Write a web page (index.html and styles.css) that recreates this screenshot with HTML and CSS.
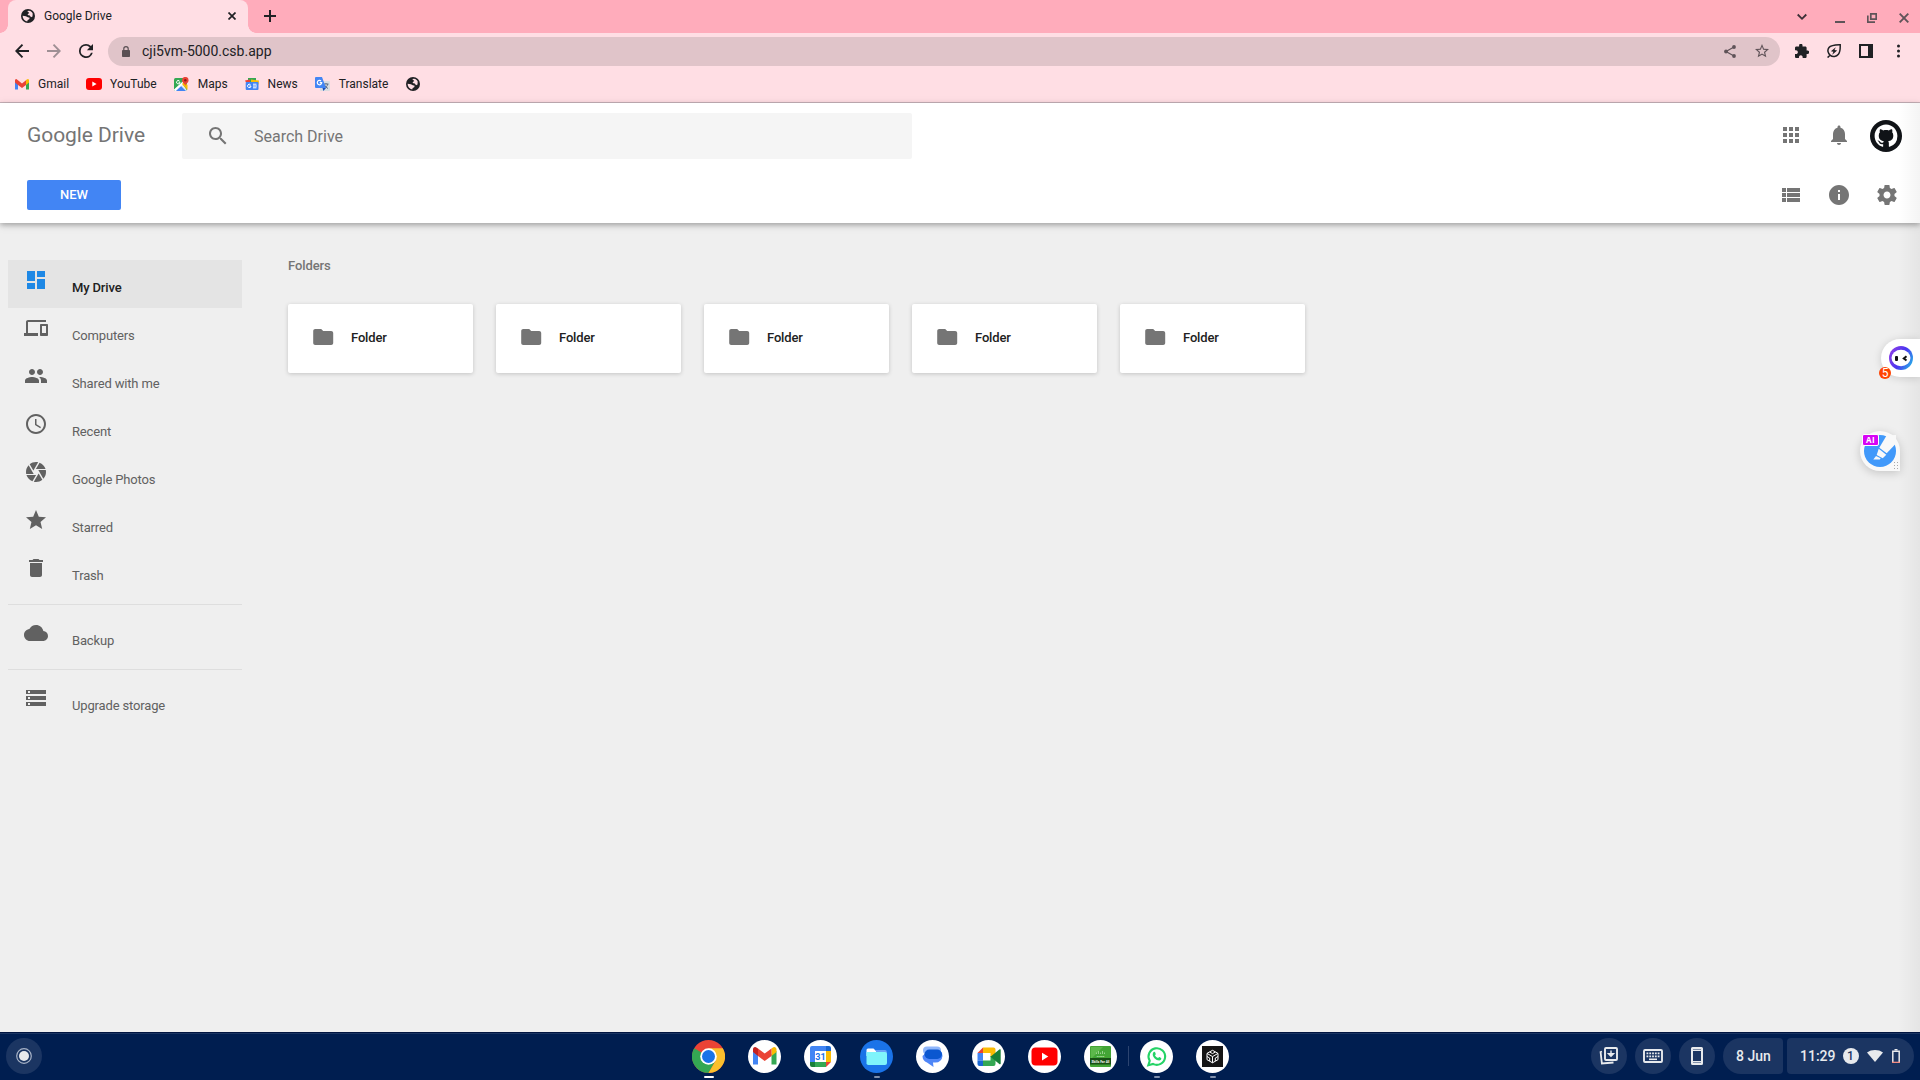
FILE: index.html
```html
<!DOCTYPE html>
<html lang="en">
<head>
<meta charset="utf-8">
<title>Google Drive</title>
<link rel="stylesheet" href="styles.css">
</head>
<body>
<svg class="defs" width="0" height="0" aria-hidden="true">
  <symbol id="globe" viewBox="0 0 14 14"><circle cx="7" cy="7" r="7" fill="#202124"/><path d="M6.2 2.1 8 1.7c1.800.300 3.100 1.300 3.700 2.900L11.500 7.500 10 8.200 8.800 6.500 7.300 6.200 6.500 5.200 8.300 4.100z" fill="#ffdee4"/><path d="M1.600 6.700 4.900 7.200 6.800 8.200 8.700 8.700 8.200 10.300 6.700 11 6.200 12.400C3.500 11.900 1.600 9.700 1.600 6.700z" fill="#ffdee4"/></symbol>
  <symbol id="folder" viewBox="-.2 0 24 24"><path d="M10 4H4c-1.100 0-1.990.9-1.990 2L2 18c0 1.100.9 2 2 2h16c1.100 0 2-.9 2-2V8c0-1.100-.9-2-2-2h-8l-2-2z"/></symbol>
</svg>

<div class="browser">
  <div class="tabstrip">
    <div class="tab">
      <svg class="i14"><use href="#globe"/></svg>
      <span class="tab-title">Google Drive</span>
      <svg class="tab-close" width="8" height="8" viewBox="0 0 8 8" stroke="#202124" stroke-width="1.700"><path d="M.5.5l7 7M7.500.5l-7 7"/></svg>
    </div>
    <svg class="new-tab" width="12" height="12" viewBox="0 0 12 12" stroke="#202124" stroke-width="2"><path d="M6 0v12M0 6h12"/></svg>
    <div class="window-controls">
      <svg width="10" height="16" viewBox="0 0 10 16" fill="none" stroke="#3c3036" stroke-width="1.800"><path d="M.7 5.500 5 9.800l4.300-4.300"/></svg>
      <svg width="10" height="16" viewBox="0 0 10 16"><path d="M0 12h10v2H0z" fill="#5f5358"/></svg>
      <svg width="10" height="16" viewBox="0 0 10 16" fill="none" stroke="#5f5358" stroke-width="1.700"><path d="M3.800 4.800h5.400v5.400H3.800zM.8 6.500v6.700H8"/></svg>
      <svg width="10" height="16" viewBox="0 0 10 16" stroke="#5f5358" stroke-width="1.900"><path d="M.7 4.700l8.600 8.600M9.300 4.700.7 13.300"/></svg>
    </div>
  </div>

  <div class="toolbar">
    <svg width="14" height="14" viewBox="0 0 14 14" fill="none" stroke="#202124" stroke-width="1.900"><path d="M14 7H1.500M7.500.7 1.300 7l6.200 6.300"/></svg>
    <svg width="14" height="14" viewBox="0 0 14 14" fill="none" stroke="#9f8f94" stroke-width="1.900"><path d="M0 7h12.500M6.500.7 12.700 7l-6.200 6.300"/></svg>
    <svg width="14" height="14" viewBox="4 4 16 16" fill="#202124"><path d="M17.650 6.350A7.958 7.958 0 0 0 12 4a8 8 0 1 0 7.730 10h-2.080A6 6 0 1 1 12 6c1.660 0 3.140.69 4.220 1.780L13 11h7V4l-2.350 2.350z"/></svg>
    <div class="omnibox">
      <svg width="8" height="11" viewBox="0 0 8 11"><rect y="4" width="8" height="7" rx=".8" fill="#5a5054"/><path d="M1.800 4V2.800a2.200 2.200 0 0 1 4.400 0V4" fill="none" stroke="#5a5054" stroke-width="1.200"/></svg>
      <span class="url">cji5vm-5000.csb.app</span>
      <svg width="12" height="13" viewBox="0 0 12 13"><path d="M10 2 2 6.500l8 4.500" fill="none" stroke="#5f5358" stroke-width="1.200"/><g fill="#5f5358"><circle cx="10" cy="2" r="1.900"/><circle cx="2" cy="6.500" r="1.900"/><circle cx="10" cy="11" r="1.900"/></g></svg>
      <svg width="14" height="14" viewBox="2 2 20 20" fill="#5f5358"><path d="M22 9.240l-7.190-.62L12 2 9.190 8.630 2 9.240l5.460 4.730L5.820 21 12 17.270 18.180 21l-1.630-7.030L22 9.240zM12 15.400l-3.760 2.270 1-4.280-3.320-2.880 4.380-.38L12 6.100l1.710 4.040 4.380.38-3.320 2.880 1 4.280L12 15.400z"/></svg>
    </div>
    <div class="extensions">
      <svg width="14" height="14" viewBox="2 1.500 20.500 20.500" fill="#202124"><path d="M20.500 11H19V7c0-1.100-.9-2-2-2h-4V3.500C13 2.120 11.880 1 10.500 1S8 2.120 8 3.500V5H4c-1.100 0-1.990.9-1.990 2v3.800H3.500c1.490 0 2.700 1.210 2.700 2.700s-1.210 2.700-2.700 2.700H2V20c0 1.100.9 2 2 2h3.800v-1.500c0-1.490 1.210-2.700 2.700-2.700 1.490 0 2.700 1.210 2.700 2.700V22H17c1.100 0 2-.9 2-2v-4h1.500c1.380 0 2.500-1.120 2.500-2.500S21.880 11 20.500 11z"/></svg>
      <svg width="14" height="14" viewBox="0 0 14 14"><path d="M13.200.8c.2 5.200 0 7.300-1.800 9.500-2 2.500-5.800 2.800-8.100 1C.6 9.200.2 5.800 2 3.500 4 1 8 1 13.200.8zM3.200 11 .6 13.600" fill="none" stroke="#202124" stroke-width="1.500"/><path d="M8.800 3.200 3.900 7.300l2.500.5-1.200 3 5-4.200-2.700-.5z" fill="#202124"/></svg>
      <svg width="14" height="14" viewBox="0 0 14 14"><path d="M0 0h14v14H0zM2 2v10h7V2z" fill="#202124" fill-rule="evenodd"/></svg>
      <svg width="14" height="14" viewBox="0 0 14 14" fill="#202124"><circle cx="7.500" cy="2" r="1.500"/><circle cx="7.500" cy="7" r="1.500"/><circle cx="7.500" cy="12" r="1.500"/></svg>
    </div>
  </div>

  <div class="bookmarks">
    <a class="bm"><svg width="14" height="11" viewBox="0 0 14 11"><path d="M0 1.500V10.500h3V5z" fill="#4285f4"/><path d="M14 1.500V10.500h-3V5z" fill="#34a853"/><path d="M11 1l1.300-.8A1.100 1.100 0 0 1 14 1.200V3.500L11 6z" fill="#fbbc04"/><path d="M3 6 0 3.500V1.200A1.100 1.100 0 0 1 1.700.3L7 4.500 11 1.200V6L7 9z" fill="#ea4335"/></svg>Gmail</a>
    <a class="bm tight"><svg width="16" height="12" viewBox="0 0 16 12"><rect width="16" height="12" rx="3" fill="#f00"/><path d="M6.300 3.500v5L10.600 6z" fill="#fff"/></svg>YouTube</a>
    <a class="bm"><svg width="15" height="14" viewBox="0 0 15 14"><rect y="1" width="13" height="13" rx="1.500" fill="#34a853"/><path d="M0 13 8 6l5 7.500-.8.500H1z" fill="#e8eaed"/><path d="M2 14l5-5 5 5z" fill="#4285f4"/><path d="M0 12.500 12.500 1 14 3 1 14z" fill="#fff"/><path d="M8 7l5.500 6V8L10 5z" fill="#fbbc04"/><path d="M11.300 9C11.300 6.500 8 6 8 3.200a3.300 3.300 0 0 1 6.600 0C14.600 6 11.300 6.500 11.300 9z" fill="#ea4335"/><circle cx="11.300" cy="3.300" r="1.200" fill="#8c1d18"/><path d="M5.500 4A1.700 1.700 0 1 0 6 5.200H4.500" fill="none" stroke="#fff"/></svg>Maps</a>
    <a class="bm"><svg width="14" height="12" viewBox="0 0 14 12"><path d="M3 0h8v4H3z" fill="#34a853"/><path d="M0 2.500 5 1.500v3H1z" fill="#ea4335"/><path d="M6 1.500l8 1-.5 4H6z" fill="#fbbc04"/><rect x=".7" y="4" width="12.800" height="8" rx="1" fill="#4285f4"/><path d="M5.500 6.700A1.700 1.700 0 1 0 6 8H4.300M8 6.200h3.500M8 8h4M8 9.800h3.500" stroke="#fff" fill="none"/></svg>News</a>
    <a class="bm last"><svg width="15" height="14" viewBox="0 0 15 14"><rect x="5" y="4" width="10" height="10" rx="1" fill="#dadce0"/><path d="M8.500 7h5M11 6v1M12.800 7c-.5 2.200-2 3.600-3.500 4.500M9.500 8c.7 1.600 2 2.800 3.500 3.500" stroke="#5f6f85" fill="none"/><path d="M1 0h6l4 11H1a1 1 0 0 1-1-1V1a1 1 0 0 1 1-1z" fill="#4285f4"/><path d="M7.500 11H11l-2.600 3z" fill="#1a50b8"/><path d="M6 4A2.200 2.200 0 1 0 6.700 5.600H4.700" stroke="#fff" stroke-width="1.200" fill="none"/></svg>Translate</a>
    <svg class="i14"><use href="#globe"/></svg>
  </div>
</div>

<div class="page">
  <header class="header">
    <div class="row top">
      <h1 class="logo">Google Drive</h1>
      <div class="search">
        <svg width="24" height="24" viewBox="0 0 24 24" fill="#757575"><path d="M15.500 14h-.79l-.28-.27C15.410 12.590 16 11.110 16 9.500 16 5.910 13.090 3 9.500 3S3 5.910 3 9.500 5.910 16 9.500 16c1.610 0 3.090-.59 4.230-1.570l.27.28v.79l5 4.990L20.490 19l-4.990-5zm-6 0C7.010 14 5 11.990 5 9.500S7.010 5 9.500 5 14 7.010 14 9.500 11.990 14 9.500 14z"/></svg>
        <span>Search Drive</span>
      </div>
      <div class="actions">
        <svg viewBox="0 0 24 24"><path d="M4 8h4V4H4v4zm6 12h4v-4h-4v4zm-6 0h4v-4H4v4zm0-6h4v-4H4v4zm6 0h4v-4h-4v4zm6-10v4h4V4h-4zm-6 4h4V4h-4v4zm6 6h4v-4h-4v4zm0 6h4v-4h-4v4z"/></svg>
        <svg viewBox="0 0 24 24"><path d="M12 22c1.100 0 2-.9 2-2h-4c0 1.100.89 2 2 2zm6-6v-5c0-3.070-1.640-5.640-4.500-6.320V4c0-.83-.67-1.500-1.500-1.500s-1.500.67-1.500 1.500v.68C7.630 5.360 6 7.920 6 11v5l-2 2v1h16v-1l-2-2z"/></svg>
        <svg class="avatar" viewBox="0 0 32 32"><circle cx="16" cy="16" r="16" fill="#101317"/><path transform="translate(4.600 4.600) scale(1.425)" fill="#fff" d="M8 0C3.580 0 0 3.580 0 8c0 3.540 2.290 6.530 5.470 7.590.4.070.55-.17.55-.38 0-.19-.01-.82-.01-1.490-2.010.37-2.530-.49-2.690-.94-.09-.23-.48-.94-.82-1.130-.28-.15-.68-.52-.01-.53.63-.01 1.080.58 1.230.82.72 1.210 1.870.87 2.330.66.07-.52.28-.87.51-1.070-1.780-.2-3.640-.89-3.640-3.950 0-.87.31-1.590.82-2.150-.08-.2-.36-1.020.08-2.120 0 0 .67-.21 2.200.82.64-.18 1.320-.27 2-.27.68 0 1.360.09 2 .27 1.530-1.040 2.200-.82 2.200-.82.44 1.100.16 1.920.08 2.120.51.56.82 1.270.82 2.150 0 3.070-1.870 3.750-3.650 3.950.29.25.54.73.54 1.480 0 1.070-.01 1.930-.01 2.200 0 .21.15.46.55.38A8.013 8.013 0 0 0 16 8c0-4.420-3.580-8-8-8z"/></svg>
      </div>
    </div>
    <div class="row bottom">
      <button class="new">NEW</button>
      <div class="actions">
        <svg viewBox="0 0 24 24"><path d="M3 14h4v-4H3v4zm0 5h4v-4H3v4zM3 9h4V5H3v4zm5 5h13v-4H8v4zm0 5h13v-4H8v4zM8 5v4h13V5H8z"/></svg>
        <svg viewBox="0 0 24 24"><path d="M12 2C6.480 2 2 6.480 2 12s4.480 10 10 10 10-4.480 10-10S17.520 2 12 2zm1 15h-2v-6h2v6zm0-8h-2V7h2v2z"/></svg>
        <svg viewBox="0 0 24 24"><path d="M19.430 12.980c.04-.32.07-.64.07-.98s-.03-.66-.07-.98l2.110-1.650c.19-.15.24-.42.12-.64l-2-3.460c-.12-.22-.39-.3-.61-.22l-2.490 1c-.52-.4-1.080-.73-1.690-.98l-.38-2.650C14.460 2.180 14.250 2 14 2h-4c-.25 0-.46.18-.49.42l-.38 2.650c-.61.25-1.170.59-1.690.98l-2.490-1c-.23-.09-.49 0-.61.22l-2 3.460c-.13.22-.07.49.12.64l2.110 1.650c-.04.32-.07.65-.07.98s.03.66.07.98l-2.110 1.650c-.19.15-.24.42-.12.64l2 3.460c.12.22.39.3.61.22l2.490-1c.52.4 1.080.73 1.690.98l.38 2.650c.03.24.24.42.49.42h4c.25 0 .46-.18.49-.42l.38-2.650c.61-.25 1.170-.59 1.690-.98l2.490 1c.23.09.49 0 .61-.22l2-3.460c.12-.22.07-.49-.12-.64l-2.110-1.650zM12 15.500c-1.930 0-3.500-1.570-3.500-3.500s1.570-3.500 3.500-3.500 3.500 1.570 3.500 3.500-1.570 3.500-3.500 3.500z"/></svg>
      </div>
    </div>
  </header>

  <div class="body">
    <nav class="sidebar">
      <a class="item active"><svg viewBox="0 0 24 24"><path d="M3 13h8V3H3v10zm0 8h8v-6H3v6zm10 0h8V11h-8v10zm0-18v6h8V3h-8z"/></svg><span>My Drive</span></a>
      <a class="item"><svg viewBox="0 0 24 24"><path d="M4 6h18V4H4c-1.100 0-2 .9-2 2v11H0v3h14v-3H4V6zm19 2h-6c-.55 0-1 .45-1 1v10c0 .55.45 1 1 1h6c.55 0 1-.45 1-1V9c0-.55-.45-1-1-1zm-1 9h-4v-7h4v7z"/></svg><span>Computers</span></a>
      <a class="item"><svg viewBox="0 0 24 24"><path d="M16 11c1.660 0 2.990-1.340 2.990-3S17.660 5 16 5c-1.660 0-3 1.340-3 3s1.340 3 3 3zm-8 0c1.660 0 2.990-1.340 2.990-3S9.660 5 8 5C6.340 5 5 6.340 5 8s1.340 3 3 3zm0 2c-2.330 0-7 1.170-7 3.500V19h14v-2.500c0-2.330-4.670-3.500-7-3.500zm8 0c-.29 0-.62.02-.97.05 1.160.84 1.970 1.970 1.970 3.450V19h6v-2.500c0-2.330-4.670-3.500-7-3.500z"/></svg><span>Shared with me</span></a>
      <a class="item"><svg viewBox="0 0 24 24"><path d="M11.990 2C6.470 2 2 6.480 2 12s4.470 10 9.990 10C17.520 22 22 17.520 22 12S17.520 2 11.990 2zM12 20c-4.420 0-8-3.580-8-8s3.580-8 8-8 8 3.580 8 8-3.580 8-8 8zm.5-13H11v6l5.250 3.150.75-1.230-4.500-2.670z"/></svg><span>Recent</span></a>
      <a class="item"><svg viewBox="0 0 24 24"><path d="M9.400 10.500l4.770-8.260C13.470 2.090 12.750 2 12 2c-2.400 0-4.600.85-6.320 2.250l3.660 6.350.06-.1zM21.540 9c-.92-2.920-3.150-5.260-6-6.340L11.880 9h9.660zm.26 1h-7.490l.29.500 4.760 8.250C21 16.970 22 14.610 22 12c0-.69-.07-1.350-.2-2zM8.540 12l-3.900-6.750C3.010 7.030 2 9.390 2 12c0 .69.07 1.350.2 2h7.490l-1.150-2zm-6.080 3c.92 2.920 3.150 5.260 6 6.340L12.120 15H2.460zm11.270 0l-3.900 6.760c.7.15 1.420.24 2.170.24 2.400 0 4.600-.85 6.320-2.250l-3.660-6.350-.93 1.600z"/></svg><span>Google Photos</span></a>
      <a class="item"><svg viewBox="0 0 24 24"><path d="M12 17.270L18.180 21l-1.640-7.030L22 9.240l-7.190-.61L12 2 9.190 8.630 2 9.240l5.460 4.730L5.820 21z"/></svg><span>Starred</span></a>
      <a class="item"><svg viewBox="0 0 24 24"><path d="M6 19c0 1.100.9 2 2 2h8c1.100 0 2-.9 2-2V7H6v12zM19 4h-3.500l-1-1h-5l-1 1H5v2h14V4z"/></svg><span>Trash</span></a>
      <hr>
      <a class="item"><svg viewBox="0 0 24 24"><path d="M19.350 10.040C18.670 6.590 15.640 4 12 4 9.110 4 6.600 5.640 5.350 8.040 2.340 8.360 0 10.910 0 14c0 3.310 2.690 6 6 6h13c2.760 0 5-2.240 5-5 0-2.640-2.050-4.780-4.650-4.960z"/></svg><span>Backup</span></a>
      <hr>
      <a class="item"><svg viewBox="0 0 24 24"><path d="M2 20h20v-4H2v4zm2-3h2v2H4v-2zM2 4v4h20V4H2zm4 3H4V5h2v2zm-4 7h20v-4H2v4zm2-3h2v2H4v-2z"/></svg><span>Upgrade storage</span></a>
    </nav>
    <main class="main">
      <h2>Folders</h2>
      <div class="cards">
        <div class="card"><svg><use href="#folder"/></svg>Folder</div>
        <div class="card"><svg><use href="#folder"/></svg>Folder</div>
        <div class="card"><svg><use href="#folder"/></svg>Folder</div>
        <div class="card"><svg><use href="#folder"/></svg>Folder</div>
        <div class="card"><svg><use href="#folder"/></svg>Folder</div>
      </div>
    </main>
  </div>

  <div class="edge-shade"></div>
  <div class="assistant">
    <svg width="24" height="24" viewBox="0 0 24 24"><defs><linearGradient id="ring" x1="0" y1=".3" x2="1" y2=".8"><stop offset="0" stop-color="#8a3fe8"/><stop offset=".5" stop-color="#4a35f0"/><stop offset="1" stop-color="#25b5e8"/></linearGradient></defs><circle cx="12" cy="12" r="12" fill="url(#ring)"/><ellipse cx="12" cy="12" rx="9.500" ry="8.200" fill="#fff"/><rect x="6" y="10" width="3" height="5" rx="1" fill="#111"/><path d="M17.500 10.300 14.800 12.500l2.700 2" fill="none" stroke="#111" stroke-width="2"/></svg>
    <span class="count">5</span>
  </div>
  <div class="marker">
    <svg width="32" height="32" viewBox="0 0 32 32"><circle cx="16" cy="16" r="16" fill="#4199fa"/><path d="M22.700.3 15.300 12.700l7.400 5.600L32 8.500V0z" fill="#f9f9f9"/><path d="M14.700 13.700l7.600 6-3.600 3.600-6-3.300z" fill="#f9f9f9"/><path d="M12 21l4.600 2.300-.8 1.300H9.300z" fill="#f9f9f9"/></svg>
    <span class="ai">AI</span>
    <svg class="grip" width="6" height="9" viewBox="0 0 6 9" fill="#aaa"><path d="M0 0h1v1H0zM3 0h1v1H3zM0 3h1v1H0zM3 3h1v1H3zM0 6h1v1H0zM3 6h1v1H3z"/></svg>
  </div>
</div>

<footer class="shelf">
  <div class="launcher"><svg width="16" height="16" viewBox="0 0 16 16"><circle cx="8" cy="8" r="7.300" fill="none" stroke="#a7b2c6" stroke-width="1.200"/><circle cx="8" cy="8" r="5" fill="#e8eaed"/></svg></div>
  <div class="apps">
    <div class="app on"><svg viewBox="0 0 33 33"><circle cx="16.500" cy="16.500" r="16.500" fill="#ea4335"/><path d="M16.500 16.500 2.200 8.250A16.500 16.500 0 0 0 16.500 33L23.600 20.600z" fill="#34a853"/><path d="M16.500 8.250h14.300A16.500 16.500 0 0 1 16.500 33l7.100-12.300z" fill="#fbc02d"/><circle cx="16.500" cy="16.500" r="8.300" fill="#fff"/><circle cx="16.500" cy="16.500" r="6.500" fill="#1a73e8"/></svg></div>
    <div class="app"><svg viewBox="0 0 33 33"><circle cx="16.500" cy="16.500" r="16.500" fill="#fff"/><path d="M5 11v13.500h5V14z" fill="#4285f4"/><path d="M28.500 11v13.500h-5V14z" fill="#34a853"/><path d="M23.500 8.500 25.300 7.300a2.200 2.200 0 0 1 3.200 2.200V12l-5 4z" fill="#fbbc04"/><path d="M10 8.500 16.700 13.500 23.500 8.500V16l-6.800 5L10 16z" fill="#ea4335"/><path d="M10 16 5 12V9.500a2.200 2.200 0 0 1 3.400-2.100L10 8.500z" fill="#c5221f"/></svg></div>
    <div class="app"><svg viewBox="0 0 33 33"><circle cx="16.500" cy="16.500" r="16.500" fill="#fff"/><path d="M6 8a2 2 0 0 1 2-2h14v5H11v11H6z" fill="#4285f4"/><path d="M22 6h3a2 2 0 0 1 2 2v3h-5z" fill="#1967d2"/><path d="M22 11h5v11h-5z" fill="#fbbc04"/><path d="M11 22h11v5H11z" fill="#34a853"/><path d="M6 22h5v5H8a2 2 0 0 1-2-2z" fill="#188038"/><path d="M22 22h5l-5 5z" fill="#ea4335"/><text x="16.500" y="19.800" text-anchor="middle" class="cal">31</text></svg></div>
    <div class="app open"><svg viewBox="0 0 33 33"><circle cx="16.500" cy="16.500" r="16.500" fill="#1a73e8"/><path d="M16 10h9a1.800 1.800 0 0 1 1.800 1.800V20H16z" fill="#6aa3f8"/><path d="M6.500 10a1.500 1.500 0 0 1 1.500-1.500h5.500L16 11v5H6.500z" fill="#fff"/><path d="M6.500 12H25a2 2 0 0 1 2 2v9a2 2 0 0 1-2 2H8.300a1.800 1.800 0 0 1-1.800-1.800z" fill="#7ff4fb"/></svg></div>
    <div class="app"><svg viewBox="0 0 33 33"><circle cx="16.500" cy="16.500" r="16.500" fill="#fff"/><path d="M13 10h8a6 6 0 0 1 5 3l.5 3a7 7 0 0 1-7 6.500H17L17.500 27 11 22.500C8 21.500 6.500 19 6.500 16z" fill="#4f86f7"/><rect x="7" y="6.500" width="18" height="8" rx="4" fill="#8fb6fb"/><rect x="8.500" y="9.500" width="17.500" height="9.500" rx="4.750" fill="#0b57d0"/></svg></div>
    <div class="app"><svg viewBox="0 0 33 33"><circle cx="16.500" cy="16.500" r="16.500" fill="#fff"/><path d="M5.500 13 11 7.500V13z" fill="#ea4335"/><path d="M11 7.500h10.500a2 2 0 0 1 2 2V16l-5 1v-4H11z" fill="#fbbc04"/><path d="M5.500 13H11v7.500H5.500z" fill="#4285f4"/><path d="M5.500 20.500H11V26H7.500a2 2 0 0 1-2-2z" fill="#1967d2"/><path d="M11 20.500h7.500V16h5v8a2 2 0 0 1-2 2H11z" fill="#34a853"/><path d="M18.500 16.700 27.300 9.500a.8.800 0 0 1 1.400.6v13.300a.8.800 0 0 1-1.400.6z" fill="#188038"/></svg></div>
    <div class="app"><svg viewBox="0 0 33 33"><circle cx="16.500" cy="16.500" r="16.500" fill="#fff"/><rect x="3.500" y="7.500" width="26" height="18" rx="4" fill="#f00"/><path d="M14 12.800v7.600l6.300-3.800z" fill="#fff"/></svg></div>
    <div class="app"><svg viewBox="0 0 33 33"><circle cx="16.500" cy="16.500" r="16.500" fill="#fff"/><rect x="6" y="6" width="21" height="21" rx="1" fill="#43a535"/><path d="M7 7l12 0-12 12z" fill="#5cb84b"/><rect x="6" y="18" width="21" height="6.500" fill="#174f14"/><path d="M12.500 12.500v1.500M14.500 11v3M16.500 12.500v1.500M18.500 11v3M20.500 12.500v1.500" stroke="#b9e3b2" stroke-width=".7"/><text x="16.500" y="16.900" text-anchor="middle" class="cisco">CISCO</text><text x="16.500" y="22.500" text-anchor="middle" class="skills">Skills For All</text></svg></div>
    <div class="app open first"><svg viewBox="0 0 33 33"><circle cx="16.500" cy="16.500" r="16.500" fill="#fff"/><path d="M8.300 25.200 9.700 20.800A8.300 8.300 0 1 1 13 23.900z" fill="none" stroke="#25d366" stroke-width="2.100"/><path d="M13.700 12c.5-.4 1.200-.3 1.400.3l.7 1.600c0 .5-.5.9-.8 1.300.7 1.300 1.700 2.200 3.100 2.800.4-.3.700-1 1.200-1l1.900.9c.5 1.200-.8 2.500-2 2.500-3.300 0-6.500-3.500-6.500-6 0-1 .4-1.900 1-2.400z" fill="#25d366"/></svg></div>
    <div class="app open"><svg viewBox="0 0 33 33"><circle cx="16.500" cy="16.500" r="16.500" fill="#fff"/><rect x="6" y="6" width="21" height="21" fill="#151515"/><path d="M16.500 10.300l5.500 3.100v6.300l-5.500 3.100-5.500-3.100v-6.300zM11 13.400l5.500 3.200 5.500-3.200M16.500 16.600v6.200M13.700 12l2.800 1.600 2.800-1.600M11 16.500l2.700 1.500v3M22 16.500 19.300 18v3" fill="none" stroke="#fff" stroke-width="1"/></svg></div>
  </div>
  <div class="status">
    <div class="round"><svg width="20" height="20" viewBox="0 0 20 20"><rect x="6" y="2" width="12" height="12" rx="1" fill="none" stroke="#e8eaed" stroke-width="1.900"/><path d="M3 5.500 1.600 6l1.300 11.500L14.500 16.500" fill="none" stroke="#e8eaed" stroke-width="1.800"/><path d="M12 4.500v4M9.500 7.800 12 10.300l2.500-2.500z" stroke="#e8eaed" stroke-width="1.400" fill="#e8eaed"/></svg></div>
    <div class="round"><svg width="20" height="14" viewBox="0 0 20 14"><rect x="1" y="1" width="18" height="12" rx="1" fill="none" stroke="#e8eaed" stroke-width="1.900"/><path d="M3.500 4.300h13M3.500 7.300h13" stroke="#e8eaed" stroke-width="1.800" stroke-dasharray="1.800 1"/><path d="M6 10.300h8" stroke="#e8eaed" stroke-width="1.600"/></svg></div>
    <div class="round"><svg width="12" height="18" viewBox="0 0 12 18"><path d="M1.500 0h9A1.500 1.500 0 0 1 12 1.500v15a1.500 1.500 0 0 1-1.500 1.500h-9A1.500 1.500 0 0 1 0 16.500v-15A1.500 1.500 0 0 1 1.500 0zM2 4v10h8V4zM2 2v.6h8V2zM2 15.500v.6h8v-.6z" fill="#e8eaed" fill-rule="evenodd"/></svg></div>
    <div class="pill date">8 Jun</div>
    <div class="pill tray"><span>11:29</span><span class="badge">1</span>
      <svg width="16" height="12" viewBox="0 0 16 12"><path d="M0 2.500C4.500-.8 11.500-.8 16 2.500L8 12z" fill="#e8eaed"/></svg>
      <svg class="battery" width="8" height="14" viewBox="0 0 8 14"><path d="M2.500 0h3v1.500h-3z" fill="#e8eaed"/><path d="M.8 13V2.200h6.400V13" fill="none" stroke="#e8eaed" stroke-width="1.500"/><path d="M0 12.700h8V14H0z" fill="#f28b82"/></svg>
    </div>
  </div>
</footer>
</body>
</html>
```
FILE: styles.css
```css
* { box-sizing: border-box; }
body {
  margin: 0;
  height: 1080px;
  display: flex;
  flex-direction: column;
  overflow: hidden;
  font-family: Roboto, "Liberation Sans", sans-serif;
  background: #efefef;
}
svg { display: block; flex: none; }
.defs { position: absolute; }
.i14 { width: 14px; height: 14px; }

/* Browser chrome */
.browser { height: 103px; flex: none; background: #ffdee4; border-bottom: 1px solid #c9b3ba; color: #202124; }
.tabstrip { height: 33px; display: flex; align-items: center; background: #ffacbb; padding-left: 8px; }
.tab {
  position: relative;
  width: 240px;
  height: 33px;
  display: flex;
  align-items: center;
  padding: 0 12px 1px 13px;
  background: #ffdee4;
  border-radius: 8px 8px 0 0;
  font-size: 12px;
}
.tab::before, .tab::after { content: ""; position: absolute; bottom: 0; width: 8px; height: 8px; }
.tab::before { left: -8px; background: radial-gradient(circle at 0 0, #ffacbb 7.500px, #ffdee4 8px); }
.tab::after { right: -8px; background: radial-gradient(circle at 100% 0, #ffacbb 7.500px, #ffdee4 8px); }
.tab-title { margin-left: 9px; flex: 1; }
.new-tab { margin-left: 16px; margin-bottom: 1px; }
.window-controls { display: flex; gap: 22px; margin-left: auto; padding-right: 11px; }
.window-controls svg:first-child { margin-right: 6px; }

.toolbar { height: 37px; display: flex; align-items: center; padding: 0 15px 1px; gap: 18px; }
.toolbar .omnibox { margin-left: -3px; }
.omnibox {
  flex: 1;
  height: 29px;
  display: flex;
  align-items: center;
  padding: 0 11px 0 14px;
  border-radius: 15px;
  background: #e0c4c9;
  font-size: 14px;
}
.url { margin-left: 12px; flex: 1; }
.omnibox svg:last-child { margin-left: 19px; }
.extensions { display: flex; gap: 18px; margin-left: -3px; }

.bookmarks { display: flex; align-items: center; height: 28px; padding-left: 15px; font-size: 12px; }
.bm { display: flex; align-items: center; gap: 9px; margin-right: 17px; }
.tight { gap: 8px; }
.last { margin-right: 18px; }

/* Drive page */
.page { position: relative; height: 929px; flex: none; display: flex; flex-direction: column; }
.header {
  position: relative;
  height: 120px;
  flex: none;
  background: #fff;
  box-shadow: 0 2px 5px rgba(0, 0, 0, .26), 0 2px 10px rgba(0, 0, 0, .1);
}
.row { display: flex; align-items: center; padding: 0 21px 0 27px; }
.top { height: 66px; }
.bottom { height: 52px; }
.logo { margin: 0; width: 155px; padding-bottom: 2px; font-size: 21px; letter-spacing: -.06px; font-weight: 400; color: #757575; line-height: 24px; }
.search {
  width: 730px;
  height: 46px;
  display: flex;
  align-items: center;
  gap: 24px;
  padding-left: 24px;
  background: #f5f5f5;
  border-radius: 2px;
  color: #757575;
  font-size: 16px;
}
.actions { display: flex; align-items: center; gap: 24px; margin-left: auto; }
.actions svg { width: 24px; height: 24px; fill: #757575; }
.top .actions svg { margin-bottom: 2px; }
.actions .avatar, .top .actions .avatar { width: 32px; height: 32px; margin: 0 -3px 0 -5px; }
.new {
  width: 94px;
  height: 30px;
  padding: 0 0 1px;
  border: 0;
  border-radius: 2px;
  background: #4285f4;
  color: #fff;
  font: 500 13px Roboto, sans-serif;
}

.body { display: flex; }
.sidebar { width: 242px; padding: 37px 0 0 8px; }
.item { height: 48px; display: flex; padding: 8px 0 0 16px; gap: 24px; color: #616161; font-size: 13px; letter-spacing: -.15px; }
.item svg { width: 24px; height: 24px; fill: #616161; }
.item span { line-height: 16px; padding-top: 12px; }
.active { background: #e4e4e4; color: #212121; font-weight: 500; }
.active svg { fill: #1e88e5; }
.sidebar hr { margin: 8px 0; border: 0; height: 1px; background: #dedede; }
.main { padding: 35px 0 0 46px; }
.main h2 { margin: 0; font-size: 13px; line-height: 16px; font-weight: 500; letter-spacing: -.1px; color: #757575; }
.cards { display: flex; gap: 23px; margin-top: 30px; }
.card {
  width: 185px;
  height: 69px;
  display: flex;
  align-items: center;
  gap: 16px;
  padding: 0 0 3px 23px;
  background: #fff;
  border-radius: 2px;
  box-shadow: 0 1px 4px rgba(0, 0, 0, .18);
  color: #212121;
  font-size: 13px;
  font-weight: 500;
  letter-spacing: -.15px;
}
.card svg { width: 24px; height: 24px; fill: #757575; }

/* Floating extension widgets */
.edge-shade { position: absolute; top: 0; right: 0; bottom: 0; width: 22px; background: linear-gradient(90deg, transparent, rgba(0, 0, 0, .045)); }
.assistant {
  position: absolute;
  top: 236px;
  right: 0;
  width: 39px;
  height: 38px;
  padding: 7px 0 0 8px;
  background: #fff;
  border-radius: 19px 0 0 19px;
  box-shadow: 0 1px 8px rgba(0, 0, 0, .15);
}
.count {
  position: absolute;
  left: -2px;
  top: 28px;
  width: 12px;
  height: 12px;
  border-radius: 50%;
  background: #ff4302;
  color: #fff;
  font-size: 12px;
  line-height: 12px;
  text-align: center;
}
.marker {
  position: absolute;
  left: 1860px;
  top: 328px;
  width: 40px;
  height: 40px;
  padding: 4px;
  background: #f9f9f9;
  border-radius: 20px 20px 0 20px;
  box-shadow: 0 2px 10px rgba(0, 0, 0, .18);
}
.ai {
  position: absolute;
  left: 2px;
  top: 3px;
  width: 17px;
  height: 12px;
  border: 1px solid #fff;
  border-radius: 2px;
  background: #d704f5;
  color: #fff;
  font: 700 8px/10px "Open Sans", sans-serif;
  letter-spacing: .5px;
  text-align: center;
}
.grip { position: absolute; right: 0; bottom: 0; }

/* ChromeOS shelf */
.shelf {
  height: 48px;
  flex: none;
  display: grid;
  grid-template-columns: 1fr 560px 1fr;
  align-items: center;
  padding: 0 6px 1px;
  background: #001e50;
  border-top: 1px solid #001440;
  box-shadow: inset 0 1px #1b3562;
  color: #e8eaed;
}
.launcher { width: 36px; height: 36px; border-radius: 50%; background: #1b3562; display: grid; place-items: center; }
.apps { display: flex; }
.app { position: relative; width: 56px; height: 46px; display: grid; place-items: center; }
.app svg { width: 33px; height: 33px; }
.on::after, .open::after { content: ""; position: absolute; bottom: 1px; left: 24px; width: 10px; height: 2px; border-radius: 1px; background: #fff; }
.open::after { left: 26px; width: 6px; background: #8090ad; }
.first::before { content: ""; position: absolute; left: 0; top: 13px; width: 1px; height: 20px; background: #2c4470; }
.cal { font: 700 9px Roboto, sans-serif; fill: #1a73e8; }
.cisco { font: 700 2.500px Roboto, sans-serif; fill: #d5f0d0; }
.skills { font: 700 3.200px Roboto, sans-serif; fill: #fff; }
.status { display: flex; align-items: center; justify-content: flex-end; }
.round { width: 36px; height: 36px; margin-right: 8px; border-radius: 50%; background: #1b3562; display: grid; place-items: center; }
.pill { height: 36px; display: flex; align-items: center; background: #1b3562; font-size: 14px; font-weight: 500; }
.date { width: 60px; padding-left: 13px; border-radius: 18px 4px 4px 18px; margin-right: 4px; }
.tray { width: 127px; padding-left: 13px; border-radius: 4px 18px 18px 4px; }
.badge { width: 16px; height: 16px; margin: 0 8px 0 7px; border-radius: 50%; background: #e8eaed; color: #1b3562; font-size: 12px; line-height: 16px; text-align: center; }
.battery { margin-left: 9px; }
```
